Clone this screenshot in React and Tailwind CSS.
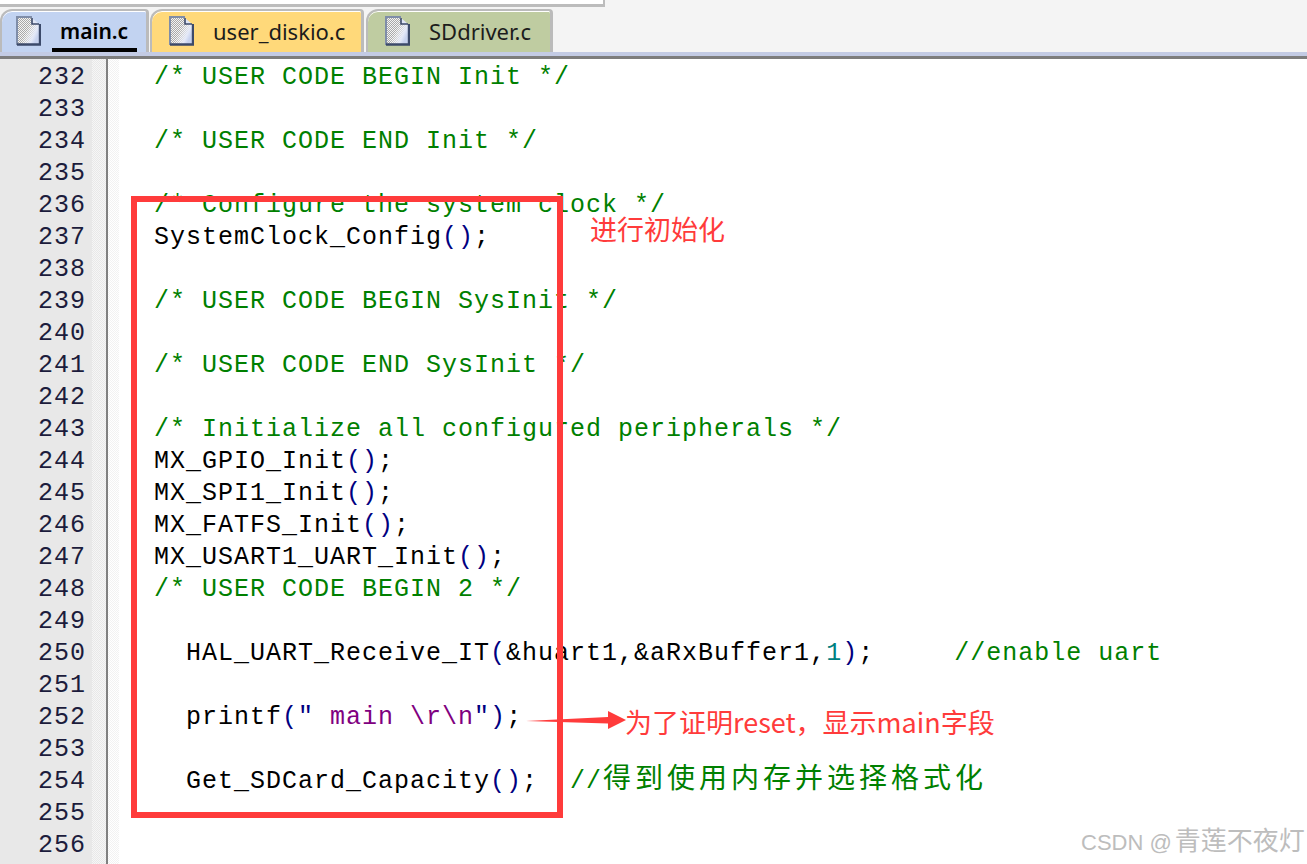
import React from 'react';

const G = 'text-[#008000]';
const N = 'text-[#000080]';
const P = 'text-[#800080]';
const T = 'text-[#008080]';

// each line is a list of [text, colour] runs, leading spaces are real
const lines = [
  [232, [['  /* USER CODE BEGIN Init */', G]]],
  [233, []],
  [234, [['  /* USER CODE END Init */', G]]],
  [235, []],
  [236, [['  /* Configure the system clock */', G]]],
  [237, [['  SystemClock_Config', ''], ['()', N], [';', '']]],
  [238, []],
  [239, [['  /* USER CODE BEGIN SysInit */', G]]],
  [240, []],
  [241, [['  /* USER CODE END SysInit */', G]]],
  [242, []],
  [243, [['  /* Initialize all configured peripherals */', G]]],
  [244, [['  MX_GPIO_Init', ''], ['()', N], [';', '']]],
  [245, [['  MX_SPI1_Init', ''], ['()', N], [';', '']]],
  [246, [['  MX_FATFS_Init', ''], ['()', N], [';', '']]],
  [247, [['  MX_USART1_UART_Init', ''], ['()', N], [';', '']]],
  [248, [['  /* USER CODE BEGIN 2 */', G]]],
  [249, []],
  [250, [['    HAL_UART_Receive_IT', ''], ['(', N], ['&huart1,&aRxBuffer1,', ''], ['1', T], [')', N], [';', ''], ['     //enable uart', G]]],
  [251, []],
  [252, [['    printf', ''], ['(', N], ['"', N], [' main \\r\\n', P], ['"', N], [')', N], [';', '']]],
  [253, []],
  [254, [['    Get_SDCard_Capacity', ''], ['()', N], [';', ''], ['  //', G]]],
  [255, []],
  [256, []],
];

const tabs = [
  { name: 'main.c', active: true, tab: 'w-[149px] bg-[#c2d3f1]', icon: 'ml-[14px] mr-[19px]', label: 'text-[21px] font-semibold text-black' },
  { name: 'user_diskio.c', tab: 'w-[214px] ml-[1px] bg-[#ffd97a]', icon: 'ml-[17px] mr-[19px]', label: 'text-[22px] text-[#1c1c1c]' },
  { name: 'SDdriver.c', tab: 'w-[187px] ml-[2px] bg-[#bfcca1]', icon: 'ml-[17px] mr-[19px]', label: 'text-[22px] text-[#1c1c1c]' },
];

const FileIcon = ({ className }) => (
  <svg className={className} width="25" height="30" viewBox="0 0 25 30">
    <defs>
      <pattern id="dots" width="2" height="2" patternUnits="userSpaceOnUse">
        <rect width="2" height="2" fill="#f4f4f4" />
        <rect width="1" height="1" fill="#a8a8a8" />
        <rect x="1" y="1" width="1" height="1" fill="#a8a8a8" />
      </pattern>
      <linearGradient id="fade" x1="0" y1="0" x2="1" y2="0.6">
        <stop offset="0.5" stopColor="#ffffff" stopOpacity="0" />
        <stop offset="0.85" stopColor="#e4e9f8" />
        <stop offset="1" stopColor="#c7d2ee" />
      </linearGradient>
    </defs>
    <path d="M2 2H16L23 9V28H2Z" fill="url(#dots)" />
    <path d="M2 2H16L23 9V28H2Z" fill="url(#fade)" />
    <path d="M1 29V1H16" fill="none" stroke="#7f8da8" strokeWidth="2" />
    <path d="M1 28.5H24V8" fill="none" stroke="#3c4a6a" strokeWidth="2.4" />
    <path d="M16 2V8H23" fill="#dfe5f5" stroke="#3c4a6a" strokeWidth="1.6" />
  </svg>
);

export default function App() {
  return (
    <div className="relative w-[1307px] h-[864px] overflow-hidden bg-white">
      {/* tab strip */}
      <div className="bg-[#f4f4f4]">
        <div className="w-[605px] h-[7px] bg-white border-b-[3px] border-r-2 border-[#bcbcbc]" />
        <div className="flex items-end h-[45px]">
          {tabs.map((t) => (
            <div
              key={t.name}
              className={`relative flex items-center h-[43px] pb-[1px] rounded-tl-[12px] rounded-tr-[4px] border-t-2 border-l-2 border-r-[3px] border-[#bbbbbb] shadow-[inset_0_1px_0_#ffffff] ${t.tab}`}
            >
              <FileIcon className={t.icon} />
              <span className={`font-['Noto_Sans',sans-serif] leading-none ${t.label}`}>{t.name}</span>
              {t.active && <div className="absolute left-[50px] bottom-0 w-[85px] h-[4px] bg-black" />}
            </div>
          ))}
        </div>
        <div className="h-[4px] bg-[#c3cbe4]" />
        <div className="h-[3px] bg-[#7d7d7d]" />
      </div>

      {/* editor */}
      <div className="flex font-['Liberation_Mono',monospace] text-[25px] tracking-[1px]">
        <div className="w-[92px] bg-[#e8e8e8] pt-[3px]">
          {lines.map(([n]) => (
            <div key={n} className="h-[32px] leading-[32px] pr-[6px] text-right text-[#1c1c3c]">{n}</div>
          ))}
        </div>
        <div className="w-[14px] h-[810px] bg-[repeating-conic-gradient(#e8e8e8_0%_25%,#f6f6f6_0%_50%)] bg-[length:2px_2px]" />
        <div className="w-[2px] h-[810px] bg-[#808080]" />
        <div className="w-[11px] h-[810px] bg-[repeating-conic-gradient(#f2f2f2_0%_25%,#ffffff_0%_50%)] bg-[length:2px_2px]" />
        <div className="flex-1 pt-[3px] pl-[3px] whitespace-pre text-black">
          {lines.map(([n, runs]) => (
            <div key={n} className="h-[32px] leading-[32px]">
              {runs.map(([text, colour], i) => (
                <span key={i} className={colour}>{text}</span>
              ))}
              {n === 254 && (
                <span className="ml-[1px] font-['Noto_Sans_CJK_SC',sans-serif] text-[28px] leading-[0] tracking-[4px] text-[#008000]">得到使用内存并选择格式化</span>
              )}
            </div>
          ))}
        </div>
      </div>

      {/* hand drawn annotations on top of the capture */}
      <div className="absolute left-[131px] top-[196px] w-[432px] h-[622px] border-[6px] border-[#ff3b3b]" />
      <span className="absolute left-[590px] top-[215px] font-['Noto_Sans_CJK_SC',sans-serif] text-[27px] leading-[27px] text-[#ff3b3b]">进行初始化</span>
      <svg className="absolute left-[525px] top-[709px]" width="102" height="24" viewBox="0 0 102 24">
        <path d="M1 12L83 8V2L101 11L83 20V14.5Z" fill="#ff3b3b" />
      </svg>
      <span className="absolute left-[625px] top-[702px] font-['Noto_Sans_CJK_SC',sans-serif] text-[27px] leading-[40px] text-[#ff3b3b]">为了证明reset，显示main字段</span>
      <span className="absolute left-[1081px] top-[821px] font-['Liberation_Sans','Noto_Sans_CJK_SC',sans-serif] text-[22px] leading-[40px] text-[#bdbdbd]">
        CSDN @<span className="ml-[3px] text-[26px]">青莲不夜灯</span>
      </span>
    </div>
  );
}
